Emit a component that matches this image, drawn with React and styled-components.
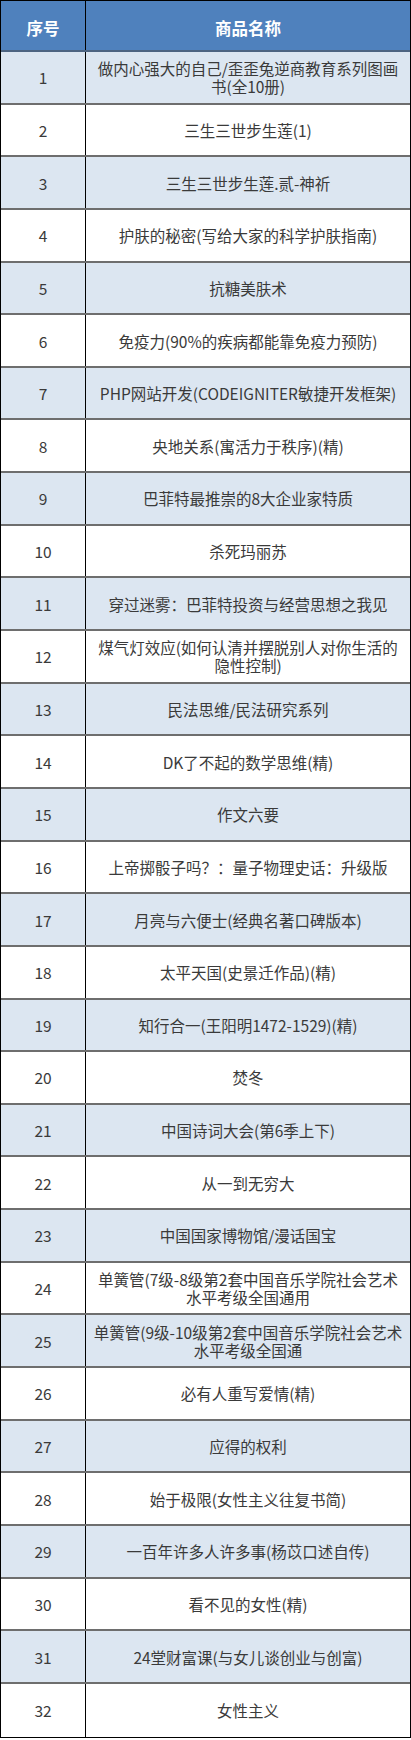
import styled, { createGlobalStyle } from 'styled-components';

const GlobalStyle = createGlobalStyle`
  html, body {
    margin: 0;
    padding: 0;
    background: #fff;
  }
  body {
    font-family: "Noto Sans CJK SC", "Liberation Sans", sans-serif;
  }
`;

const books = [
  '做内心强大的自己/歪歪兔逆商教育系列图画\n书(全10册)',
  '三生三世步生莲(1)',
  '三生三世步生莲.贰-神祈',
  '护肤的秘密(写给大家的科学护肤指南)',
  '抗糖美肤术',
  '免疫力(90%的疾病都能靠免疫力预防)',
  'PHP网站开发(CODEIGNITER敏捷开发框架)',
  '央地关系(寓活力于秩序)(精)',
  '巴菲特最推崇的8大企业家特质',
  '杀死玛丽苏',
  '穿过迷雾：巴菲特投资与经营思想之我见',
  '煤气灯效应(如何认清并摆脱别人对你生活的\n隐性控制)',
  '民法思维/民法研究系列',
  'DK了不起的数学思维(精)',
  '作文六要',
  '上帝掷骰子吗？：量子物理史话：升级版',
  '月亮与六便士(经典名著口碑版本)',
  '太平天国(史景迁作品)(精)',
  '知行合一(王阳明1472-1529)(精)',
  '焚冬',
  '中国诗词大会(第6季上下)',
  '从一到无穷大',
  '中国国家博物馆/漫话国宝',
  '单簧管(7级-8级第2套中国音乐学院社会艺术\n水平考级全国通用',
  '单簧管(9级-10级第2套中国音乐学院社会艺术\n水平考级全国通',
  '必有人重写爱情(精)',
  '应得的权利',
  '始于极限(女性主义往复书简)',
  '一百年许多人许多事(杨苡口述自传)',
  '看不见的女性(精)',
  '24堂财富课(与女儿谈创业与创富)',
  '女性主义',
];

const Table = styled.div`
  width: 411px;
  box-sizing: border-box;
  border-left: 1px solid #000;
  border-right: 1px solid #000;
  border-bottom: 1px solid #000;
`;

const Row = styled.div`
  display: grid;
  grid-template-columns: 84px 1fr;
  box-sizing: border-box;
  height: ${p => (p.$head ? '52px' : '52.65px')};
  background: ${p => (p.$head ? '#4f81bd' : p.$shade ? '#dce6f1' : '#fff')};
  border-bottom: ${p => (p.$head ? '2px solid #4d6481' : p.$last ? 'none' : '2px solid #6e6e6e')};
  border-top: ${p => (p.$head ? '1px solid #000' : 'none')};
`;

const Cell = styled.div`
  display: flex;
  align-items: center;
  justify-content: center;
  text-align: center;
  white-space: pre-line;
  padding: 0 4px;
  font-size: ${p => (p.$head ? '16.5px' : '15.5px')};
  font-weight: ${p => (p.$head ? 700 : 400)};
  line-height: 18px;
  color: ${p => (p.$head ? '#fff' : '#3a3a3a')};
  & + & {
    border-left: 1px solid #000;
  }
`;

const HeadText = styled.span`
  padding-top: 4px;
`;

export default function App() {
  return (
    <>
      <GlobalStyle />
      <Table>
        <Row $head>
          <Cell $head><HeadText>序号</HeadText></Cell>
          <Cell $head><HeadText>商品名称</HeadText></Cell>
        </Row>
        {books.map((name, i) => (
          <Row key={i} $shade={i % 2 === 0} $last={i === books.length - 1}>
            <Cell>{i + 1}</Cell>
            <Cell>{name}</Cell>
          </Row>
        ))}
      </Table>
    </>
  );
}
